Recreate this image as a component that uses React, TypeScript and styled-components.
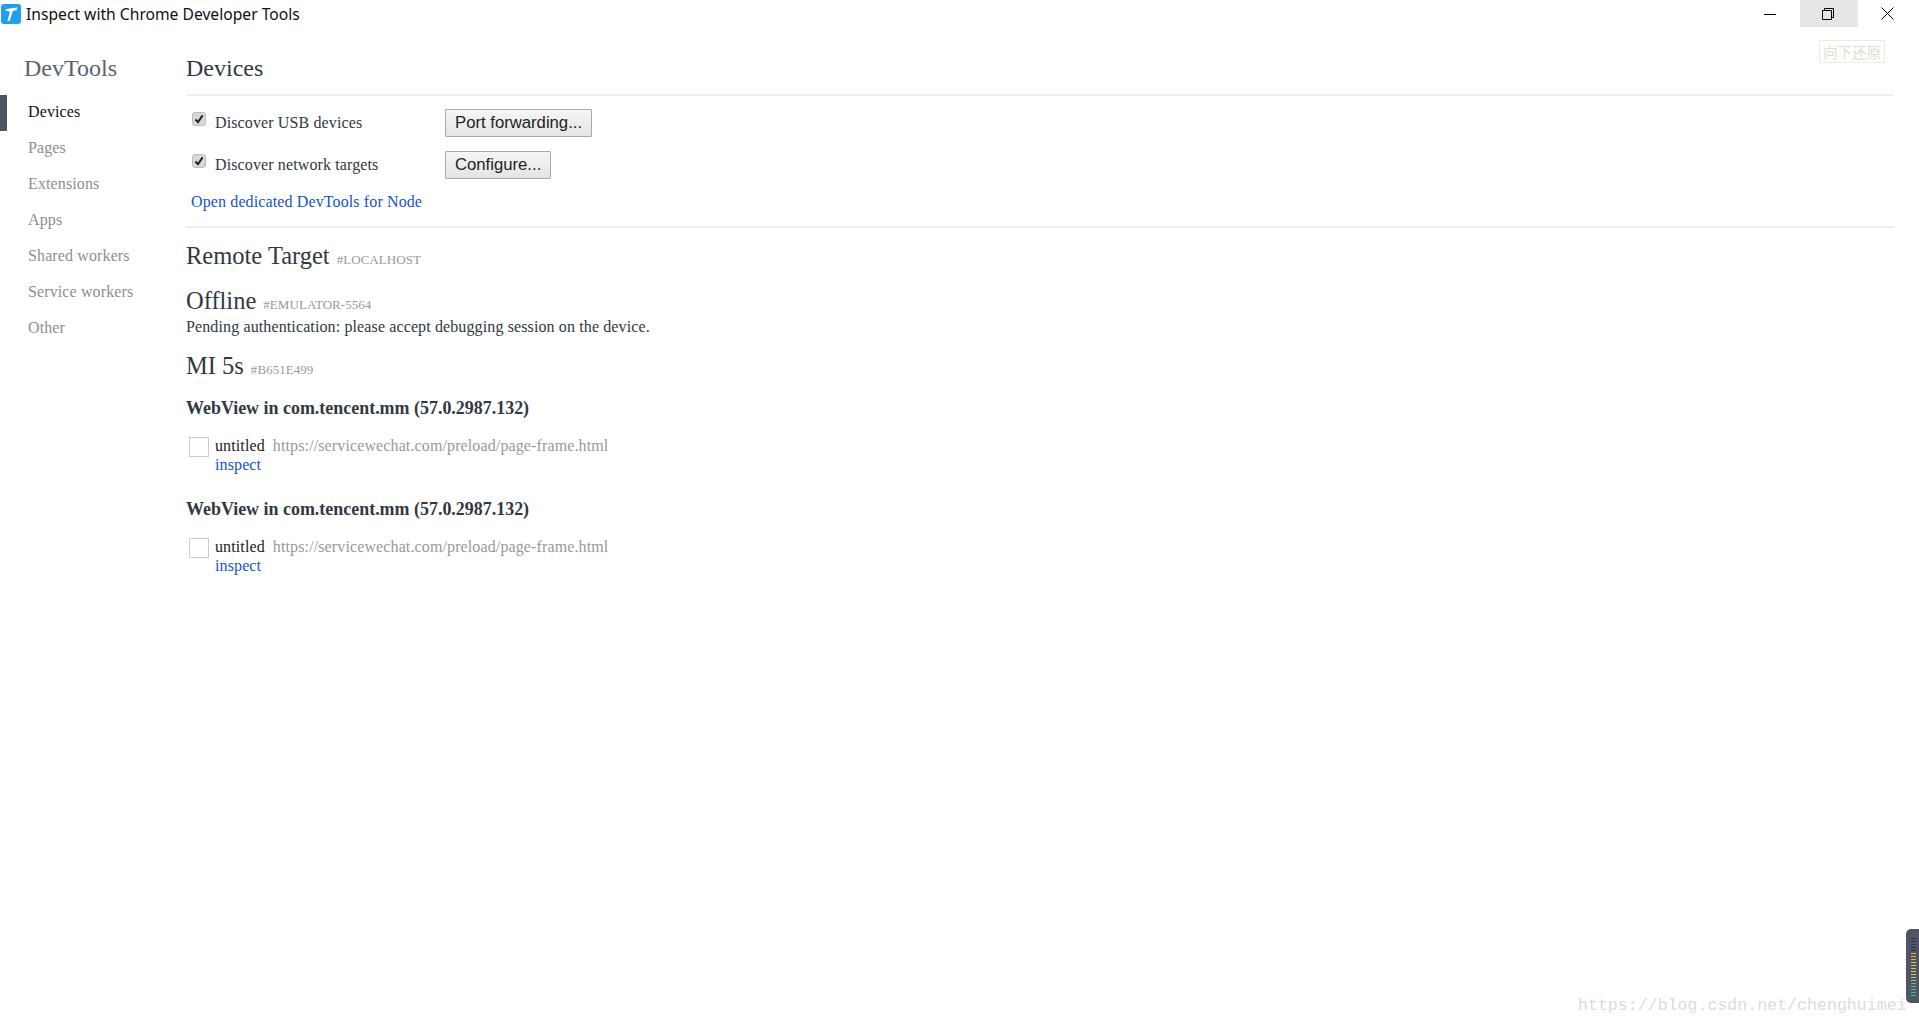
import styled, { createGlobalStyle } from 'styled-components'

const GlobalStyle = createGlobalStyle`
  html, body {
    margin: 0;
    padding: 0;
    height: 100%;
    background: #fff;
    overflow: hidden;
  }
  #root {
    height: 100%;
  }
`

const Window = styled.div`
  position: relative;
  height: 1025px;
  width: 1919px;
  overflow: hidden;
  font-family: 'Liberation Serif', 'Times New Roman', serif;
  font-size: 16px;
  letter-spacing: 0.12px;
  color: #303942;
`

const TitleBar = styled.div`
  display: flex;
  align-items: flex-start;
  height: 28px;
  padding: 4px 3px 0 1px;
  box-sizing: border-box;
  letter-spacing: 0;
`

const TitleText = styled.span`
  font-family: 'Noto Sans', 'Open Sans', sans-serif;
  font-size: 15.65px;
  line-height: 20px;
  color: #111;
  margin-left: 5px;
`

const WindowControls = styled.div`
  display: flex;
  margin: -4px 0 0 auto;
`

const ControlButton = styled.div<{ $hover?: boolean }>`
  width: 58px;
  height: 27px;
  box-sizing: border-box;
  display: flex;
  align-items: center;
  justify-content: center;
  background: ${(p) => (p.$hover ? '#e5e5e5' : 'transparent')};

  &:not(:last-child) {
    padding-right: 2px;
  }
`

const Layout = styled.div`
  display: flex;
  padding-right: 25px;
`

const Sidebar = styled.nav`
  width: 186px;
  flex: none;
`

const Brand = styled.h1`
  margin: 0;
  padding: 25px 0 0 24px;
  height: 67px;
  box-sizing: border-box;
  font-size: 24px;
  line-height: 30px;
  font-weight: 400;
  letter-spacing: 0;
  color: #5a6470;
`

const NavItem = styled.div<{ $active?: boolean }>`
  height: 36px;
  line-height: 34px;
  padding-left: 21px;
  color: ${(p) => (p.$active ? '#111' : '#8e8e8e')};
  border-left: 7px solid ${(p) => (p.$active ? '#4d5562' : 'transparent')};
`

const Main = styled.main`
  flex: 1;
  min-width: 0;
`

const PageHeader = styled.header`
  height: 68px;
  box-sizing: border-box;
  padding-top: 25px;
  border-bottom: 2px solid #eeeeee;
  font-size: 24px;
  line-height: 30px;
  letter-spacing: 0;
  color: #303942;
`

const Options = styled.section`
  padding: 6px 0 0 5px;
  height: 132px;
  box-sizing: border-box;
  border-bottom: 2px solid #eeeeee;
`

const OptionRow = styled.div`
  display: flex;
  align-items: center;
  height: 42px;
`

const OptionLabel = styled.label`
  display: flex;
  align-items: center;
  width: 254px;
  color: #303942;
`

const Check = styled.span`
  width: 14px;
  height: 14px;
  margin: -9px 9px 0 1px;
  flex: none;
  border: 1px solid #bcbcbc;
  border-radius: 3px;
  background: #d8d8d8;
  box-sizing: border-box;
  display: flex;
  align-items: center;
  justify-content: center;
`

const PlainButton = styled.button`
  height: 28px;
  padding: 0 9px;
  font-family: 'Liberation Sans', Arial, sans-serif;
  font-size: 16.7px;
  color: #222;
  border: 1px solid #a9a9a9;
  border-radius: 1px;
  background: linear-gradient(#f6f6f6, #e4e4e4);
`

const TextLink = styled.a`
  color: #1155cc;
  text-decoration: none;
`

const NodeLink = styled(TextLink)`
  display: block;
  margin-top: 7px;
  line-height: 18px;
`

const Heading = styled.h2<{ $top: number }>`
  margin: ${(p) => p.$top}px 0 0;
  font-size: 24.5px;
  line-height: 28px;
  font-weight: 400;
  letter-spacing: 0;
  color: #303942;
`

const Serial = styled.span`
  margin-left: 7px;
  font-size: 13px;
  letter-spacing: 0.05px;
  color: #999;
`

const Pending = styled.p`
  margin: -1px 0 0;
  line-height: 18px;
  color: #303942;
`

const BrowserName = styled.h3<{ $top: number }>`
  margin: ${(p) => p.$top}px 0 0;
  font-size: 17.95px;
  line-height: 20px;
  font-weight: 700;
  letter-spacing: 0;
  color: #303942;
`

const TargetRow = styled.div`
  display: flex;
  margin: 18px 0 0 3px;
`

const Thumbnail = styled.div`
  width: 20px;
  height: 20px;
  flex: none;
  border: 1px solid #ccc;
  box-sizing: border-box;
  margin: 1px 6px 0 0;
`

const TargetInfo = styled.div`
  line-height: 19px;
  color: #222;
`

const TargetUrl = styled.span`
  margin-left: 8px;
  color: #999;
`

const Tooltip = styled.div`
  position: absolute;
  left: 1819px;
  top: 40px;
  width: 66px;
  height: 23px;
  box-sizing: border-box;
  border: 1px solid #ebebe4;
  background: #fffffa;
  font-family: 'Noto Sans CJK SC', sans-serif;
  font-size: 14.5px;
  line-height: 21px;
  letter-spacing: 0;
  text-align: center;
  white-space: nowrap;
  color: #dcdcdc;
`

const Watermark = styled.div`
  position: absolute;
  left: 1578px;
  top: 996px;
  font-family: 'Liberation Mono', 'Courier New', monospace;
  font-size: 16.6px;
  line-height: 20px;
  letter-spacing: 0;
  color: #dcdcd6;
  white-space: nowrap;
`

const Meter = styled.div`
  position: absolute;
  left: 1906px;
  top: 929px;
  width: 13px;
  height: 74px;
  box-sizing: border-box;
  padding: 9px 0 0 5px;
  background: #4f5565;
  border-radius: 5px 0 0 5px;
  display: flex;
  flex-direction: column;
  gap: 1px;
`

const MeterStep = styled.span<{ $color: string }>`
  display: block;
  width: 5px;
  height: 1px;
  margin-bottom: 1px;
  background: ${(p) => p.$color};
`

const LogoIcon = () => (
  <svg width="20" height="20" viewBox="0 0 20 20">
    <rect width="20" height="20" rx="3" fill="#1e9ff5" />
    <path
      d="M4 6.2C6 3.8 11 4.6 16.6 3.4L15.6 6.2C14.2 6.4 13 6.6 12 7L8.6 16.8L6.4 17.2L9 7.4C7.4 7.4 5.4 7.2 4 6.2Z"
      fill="#fff"
    />
  </svg>
)

const sections = ['Pages', 'Extensions', 'Apps', 'Shared workers', 'Service workers', 'Other']
const meterColors = [
  '#2e3340', '#2e3340', '#2e3340', '#2e3340', '#2e3340', '#e8a33c', '#e8a33c', '#e8b63c', '#e6c23c',
  '#e2c93c', '#dccf40', '#cfd044', '#bccf4c', '#a6ca56', '#8cc462', '#74bf6e', '#5cbc7c', '#4cba8c',
  '#40ba9c', '#38bcaa',
]

const Target = () => (
  <TargetRow>
    <Thumbnail />
    <TargetInfo>
      untitled<TargetUrl>https://servicewechat.com/preload/page-frame.html</TargetUrl>
      <div>
        <TextLink href="#">inspect</TextLink>
      </div>
    </TargetInfo>
  </TargetRow>
)

const CheckMark = () => (
  <svg width="10" height="10" viewBox="0 0 10 10">
    <path d="M1.5 5.5L4 8.2L8.6 1.4" fill="none" stroke="#222" strokeWidth="2" />
  </svg>
)

const App = () => {
  return (
    <Window>
      <GlobalStyle />
      <TitleBar>
        <LogoIcon />
        <TitleText>Inspect with Chrome Developer Tools</TitleText>
        <WindowControls>
          <ControlButton>
            <svg width="12" height="12" viewBox="0 0 12 12">
              <path d="M0 6.5H12" stroke="#000" strokeWidth="1" />
            </svg>
          </ControlButton>
          <ControlButton $hover>
            <svg width="12" height="12" viewBox="0 0 12 12">
              <path d="M.5 2.5H9.5V11.5H.5ZM2.5 2.5V.5H11.5V9.5H9.5" fill="none" stroke="#000" />
            </svg>
          </ControlButton>
          <ControlButton>
            <svg width="13" height="13" viewBox="0 0 13 13">
              <path d="M.5 .5L12.5 12.5M12.5 .5L.5 12.5" stroke="#000" strokeWidth="1" />
            </svg>
          </ControlButton>
        </WindowControls>
      </TitleBar>
      <Layout>
        <Sidebar>
          <Brand>DevTools</Brand>
          <NavItem $active>Devices</NavItem>
          {sections.map((name) => (
            <NavItem key={name}>{name}</NavItem>
          ))}
        </Sidebar>
        <Main>
          <PageHeader>Devices</PageHeader>
          <Options>
            <OptionRow>
              <OptionLabel>
                <Check>
                  <CheckMark />
                </Check>
                Discover USB devices
              </OptionLabel>
              <PlainButton type="button">Port forwarding...</PlainButton>
            </OptionRow>
            <OptionRow>
              <OptionLabel>
                <Check>
                  <CheckMark />
                </Check>
                Discover network targets
              </OptionLabel>
              <PlainButton type="button">Configure...</PlainButton>
            </OptionRow>
            <NodeLink href="#">Open dedicated DevTools for Node</NodeLink>
          </Options>
          <Heading $top={14}>
            Remote Target<Serial>#LOCALHOST</Serial>
          </Heading>
          <Heading $top={13}>
            Offline<Serial>#EMULATOR-5564</Serial>
          </Heading>
          <Pending>Pending authentication: please accept debugging session on the device.</Pending>
          <Heading $top={16}>
            MI 5s<Serial>#B651E499</Serial>
          </Heading>
          <BrowserName $top={14}>WebView in com.tencent.mm (57.0.2987.132)</BrowserName>
          <Target />
          <BrowserName $top={25}>WebView in com.tencent.mm (57.0.2987.132)</BrowserName>
          <Target />
        </Main>
      </Layout>
      <Tooltip>向下还原</Tooltip>
      <Watermark>https://blog.csdn.net/chenghuimei</Watermark>
      <Meter>
        {meterColors.map((color, i) => (
          <MeterStep key={i} $color={color} />
        ))}
      </Meter>
    </Window>
  )
}

export default App
